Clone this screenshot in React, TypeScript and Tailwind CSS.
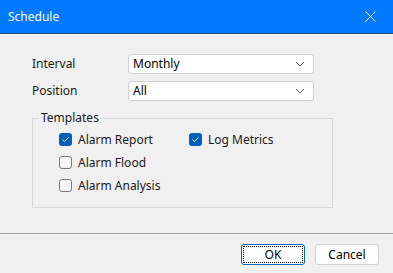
import { useState } from "react";

const Chevron = () => (
  <svg width="10" height="6" viewBox="0 0 10 6" className="shrink-0">
    <path d="M1 1 L5 5 L9 1" fill="none" stroke="#606060" strokeWidth="1" />
  </svg>
);

const Select = ({ value }: { value: string }) => (
  <div className="w-[186px] h-[20px] bg-white border border-[#d0d0d0] rounded-[3px] flex items-center justify-between pl-[4px] pr-[8px] text-[12px] text-black">
    <span>{value}</span>
    <Chevron />
  </div>
);

const Check = ({ label, checked }: { label: string; checked: boolean }) => (
  <div className="flex items-center gap-[6px] h-[13px]">
    {checked ? (
      <div className="w-[13px] h-[13px] rounded-[3px] bg-[#005fb8] flex items-center justify-center">
        <svg width="9" height="9" viewBox="0 0 9 9">
          <path d="M1.5 4.5 L3.5 6.5 L7.5 2.5" fill="none" stroke="white" strokeWidth="1" />
        </svg>
      </div>
    ) : (
      <div className="w-[13px] h-[13px] rounded-[3px] border border-[#7a7a7a] bg-[#f6f6f6]" />
    )}
    <span className="text-[12px] text-[#1a1a1a]">{label}</span>
  </div>
);

export default function App() {
  const [opts] = useState({ report: true, flood: false, analysis: false, metrics: true });

  return (
    <div
      className="w-[393px] h-[273px] bg-[#f0f0f0] flex flex-col overflow-hidden"
      style={{ fontFamily: '"Noto Sans", "Open Sans", sans-serif' }}
    >
      {/* title bar */}
      <div className="h-[34px] shrink-0 bg-[#0079fe] border-b border-[#2a4a78] flex items-center justify-between pl-[8px] pr-[17px]">
        <span className="text-white text-[12px] leading-none">Schedule</span>
        <svg width="11" height="11" viewBox="0 0 11 11">
          <path d="M0.5 0.5 L10.5 10.5 M10.5 0.5 L0.5 10.5" stroke="white" strokeWidth="1" />
        </svg>
      </div>

      <div className="flex-1 flex flex-col pt-[20px] px-[32px]">
        <div className="flex items-center">
          <span className="w-[96px] text-[12px] text-[#1a1a1a]">Interval</span>
          <Select value="Monthly" />
        </div>
        <div className="flex items-center mt-[7px]">
          <span className="w-[96px] text-[12px] text-[#1a1a1a]">Position</span>
          <Select value="All" />
        </div>

        <fieldset className="mt-[10px] w-[301px] h-[97px] border border-[#d8d8d8] pl-[6px] pr-0 pt-[8px] m-0">
          <legend className="px-[2px] text-[12px] text-[#1a1a1a] leading-[14px]">Templates</legend>
          <div className="flex gap-[18px] ml-[20px]">
            <div className="flex flex-col gap-[10px] w-[112px]">
              <Check label="Alarm Report" checked={opts.report} />
              <Check label="Alarm Flood" checked={opts.flood} />
              <Check label="Alarm Analysis" checked={opts.analysis} />
            </div>
            <div className="flex flex-col">
              <Check label="Log Metrics" checked={opts.metrics} />
            </div>
          </div>
        </fieldset>
      </div>

      <div className="h-[40px] shrink-0 border-t border-[#a0a0a0] flex items-start justify-end gap-[10px] pt-[10px] pr-[14px]">
        <button className="w-[64px] h-[21px] bg-white border border-[#0067c0] rounded-[3px] text-[12px] text-black flex items-center justify-center p-[1px]">
          <span className="w-full h-full border border-dotted border-black flex items-center justify-center rounded-[1px]">OK</span>
        </button>
        <button className="w-[64px] h-[21px] bg-[#fdfdfd] border border-[#d0d0d0] rounded-[3px] text-[12px] text-black">
          Cancel
        </button>
      </div>
    </div>
  );
}
